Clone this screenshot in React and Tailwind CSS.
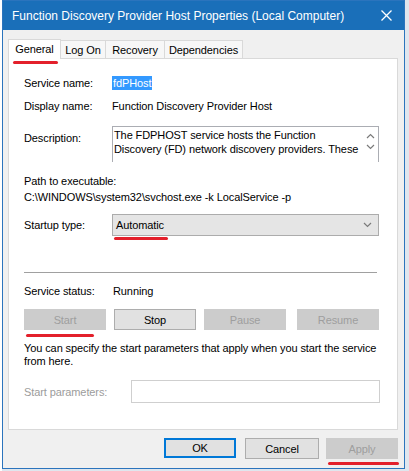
import React from 'react';

function RedMark({ className }) {
  return <div className={`absolute h-[3px] rounded-full bg-[#e3202b] ${className}`} />;
}

function Btn({ label, disabled, className = '' }) {
  return (
    <div
      className={`h-[21px] flex items-center justify-center border ${
        disabled ? 'bg-[#cccccc] border-[#cccccc] text-[#9e9e9e]' : 'bg-[#e1e1e1] border-[#adadad] text-black'
      } ${className}`}
    >
      {label}
    </div>
  );
}

function Chevron({ up }) {
  return (
    <svg width="9" height="6" viewBox="0 0 9 6" className="block">
      <path d={up ? 'M1 5 L4.5 1.5 L8 5' : 'M1 1 L4.5 4.5 L8 1'} fill="none" stroke="#7a7a7a" strokeWidth="1.2" />
    </svg>
  );
}

export default function App() {
  return (
    <div className="w-[409px] h-[471px] overflow-hidden bg-[#dfe6ee] flex font-['Segoe_UI','Liberation_Sans',sans-serif] text-[11px] tracking-[-0.1px] text-black leading-[16px]">
      <div className="w-[2px] h-full bg-white" />
      <div className="w-[403px] h-[469px] border border-[#2b74bd] bg-[#f0f0f0] flex flex-col">
        {/* title bar */}
        <div className="h-[29px] bg-[#1a6fb9] flex items-center justify-between pl-[9px] pr-[12px] text-white">
          <span className="text-[12px] tracking-normal">Function Discovery Provider Host Properties (Local Computer)</span>
          <svg width="11" height="11" viewBox="0 0 11 11">
            <path d="M0.5 0.5 L10.5 10.5 M10.5 0.5 L0.5 10.5" stroke="white" strokeWidth="1.3" />
          </svg>
        </div>

        <div className="px-[5px] pt-[8px] flex flex-col">
          {/* tabs */}
          <div className="flex items-end h-[20px] relative z-10">
            <div className="relative h-[20px] w-[53px] bg-white border border-b-0 border-[#d9d9d9] flex items-center justify-center -mb-px pb-[2px]">
              General
              <RedMark className="left-[4px] top-[21px] w-[45px]" />
            </div>
            <div className="h-[18px] w-[45px] bg-[#f7f7f7] border border-b-0 border-l-0 border-[#d9d9d9] flex items-center justify-center">Log On</div>
            <div className="h-[18px] w-[59px] bg-[#f7f7f7] border border-b-0 border-l-0 border-[#d9d9d9] flex items-center justify-center">Recovery</div>
            <div className="h-[18px] w-[78px] bg-[#f7f7f7] border border-b-0 border-l-0 border-[#d9d9d9] flex items-center justify-center">Dependencies</div>
          </div>

          {/* panel */}
          <div className="h-[372px] w-[390px] bg-white border border-[#d9d9d9] pl-[15px] pr-[17px] flex flex-col">
            <div className="mt-[16px] h-[16px] flex items-center">
              <span className="w-[88px]">Service name:</span>
              <span className="bg-[#3399ff] text-white px-[1px] h-[14px] flex items-center">fdPHost</span>
            </div>
            <div className="mt-[7px] h-[16px] flex items-center">
              <span className="w-[88px]">Display name:</span>
              <span>Function Discovery Provider Host</span>
            </div>
            <div className="mt-[12px] flex">
              <span className="w-[88px] pt-[4px]">Description:</span>
              <div className="w-[267px] h-[36px] border border-[#abadb3] border-b-0 flex">
                <div className="flex-1 pl-[1px] pt-[1px] leading-[14px] overflow-hidden">
                  The FDPHOST service hosts the Function Discovery (FD) network discovery providers. These
                </div>
                <div className="w-[16px] flex flex-col items-center pt-[6px] gap-[5px]">
                  <Chevron up />
                  <Chevron />
                </div>
              </div>
            </div>
            <div className="mt-[11px]">Path to executable:</div>
            <div>C:\WINDOWS\system32\svchost.exe -k LocalService -p</div>
            <div className="mt-[9px] flex items-center">
              <span className="w-[88px]">Startup type:</span>
              <div className="relative w-[267px] h-[22px] bg-[#e5e5e5] border border-[#acacac] flex items-center justify-between pl-[3px] pr-[6px]">
                <span>Automatic</span>
                <Chevron />
                <RedMark className="left-[1px] top-[22px] w-[54px]" />
              </div>
            </div>
            <div className="mt-[36px] h-px bg-[#a0a0a0] mr-[3px]" />
            <div className="mt-[10px] h-[16px] flex items-center">
              <span className="w-[89px]">Service status:</span>
              <span>Running</span>
            </div>
            <div className="mt-[10px] flex">
              <div className="relative">
                <Btn label="Start" disabled className="w-[82px]" />
                <RedMark className="left-[2px] top-[25px] w-[68px]" />
              </div>
              <Btn label="Stop" className="w-[82px] ml-[8px]" />
              <Btn label="Pause" disabled className="w-[82px] ml-[8px]" />
              <Btn label="Resume" disabled className="w-[82px] ml-[11px]" />
            </div>
            <div className="mt-[12px] leading-[13px]">
              You can specify the start parameters that apply when you start the service from here.
            </div>
            <div className="mt-[12px] flex items-center">
              <span className="w-[107px] text-[#9c9c9c]">Start parameters:</span>
              <div className="w-[249px] h-[23px] border border-[#cfcfcf] bg-white" />
            </div>
          </div>

          {/* bottom buttons */}
          <div className="mt-[8px] flex justify-end pr-[1px]">
            <div className="w-[72px] h-[20px] bg-[#e1e1e1] border-2 border-[#0078d7] flex items-center justify-center">OK</div>
            <Btn label="Cancel" className="w-[74px] h-[20px] ml-[9px]" />
            <div className="relative ml-[7px]">
              <Btn label="Apply" disabled className="w-[72px] h-[20px]" />
              <RedMark className="left-[2px] top-[24px] w-[71px]" />
            </div>
          </div>
        </div>
      </div>
    </div>
  );
}
